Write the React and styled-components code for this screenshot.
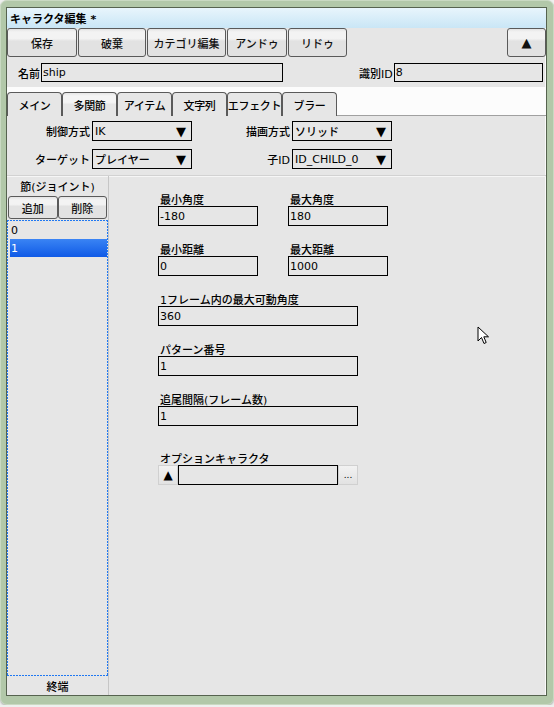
import React from "react";
import styled, { createGlobalStyle } from "styled-components";

const GlobalStyle = createGlobalStyle`
  html, body {
    margin: 0;
    padding: 0;
    background: #eef0ee;
  }
  body {
    font-family: "DejaVu Sans", "Noto Sans CJK JP", sans-serif;
    font-size: 11px;
    font-weight: 500;
    color: #000;
  }
  * { box-sizing: border-box; }
`;

const Frame = styled.div`
  position: relative;
  width: 554px;
  height: 705px;
  padding: 6px 6px 8px 5px;
  background: #b2c8a9;
  border: 1px solid #c9d9c2;
  border-radius: 7px;
  box-shadow: 0 1px 2px rgba(0, 0, 0, 0.25);
  display: flex;
`;

const Inner = styled.div`
  flex: 1;
  display: flex;
  flex-direction: column;
  border: 1px solid #56634f;
  background: #e6e6e6;
  box-shadow: inset -1px 0 0 #fafafa;
`;

const TitleBar = styled.div`
  height: 20px;
  padding-left: 3px;
  display: flex;
  align-items: center;
  font-weight: bold;
  background: linear-gradient(#e8f5fc, #c9e6f6);
`;

const Toolbar = styled.div`
  height: 30px;
  display: flex;
  gap: 1px;
  align-items: flex-start;
`;

const Button = styled.button`
  width: ${(p) => p.$w}px;
  height: ${(p) => p.$h || 29}px;
  margin-left: ${(p) => (p.$push ? "auto" : "0")};
  padding: 0;
  font-family: inherit;
  font-size: 11px;
  font-weight: 500;
  color: #111;
  border: 1px solid #5a5a5a;
  border-radius: 3px;
  background: linear-gradient(
    #e4e4e4 0,
    #f3f3f3 3px,
    #f3f3f3 35%,
    #e2e2e2 45%,
    #e2e2e2 100%
  );
  display: flex;
  align-items: center;
  justify-content: center;
  white-space: nowrap;
`;

const NameRow = styled.div`
  height: 29px;
  padding: 0 3px 0 11px;
  display: flex;
  align-items: center;
  gap: 1px;
`;

const FieldLabel = styled.span`
  white-space: nowrap;
  margin-left: ${(p) => p.$ml || 0}px;
`;

const TextBox = styled.div`
  width: ${(p) => (p.$w ? `${p.$w}px` : "auto")};
  flex: ${(p) => (p.$grow ? 1 : "none")};
  height: ${(p) => p.$h || 20}px;
  border: 1px solid #000;
  background: #e6e6e6;
  padding-left: 1px;
  display: flex;
  align-items: center;
  white-space: nowrap;
`;

const TabStrip = styled.div`
  height: 29px;
  background: #fcfcfc;
  display: flex;
  align-items: flex-end;
  border-bottom: 1px solid #a0a0a0;
`;

const Tab = styled.div`
  width: 55px;
  height: 24px;
  margin-bottom: -1px;
  border: 1px solid #5a5a5a;
  border-bottom: none;
  border-radius: 4px 4px 0 0;
  display: flex;
  align-items: center;
  justify-content: center;
  white-space: nowrap;
  letter-spacing: -0.3px;
  overflow: hidden;
  background: ${(p) =>
    p.$active
      ? "linear-gradient(#e6e6e6 0, #f4f4f4 3px, #f4f4f4 40%, #e6e6e6 50%)"
      : "#e6e6e6"};
`;

const Panel = styled.div`
  flex: 1;
  display: flex;
  flex-direction: column;
  min-height: 0;
`;

const SettingsGrid = styled.div`
  display: grid;
  grid-template-columns: 83px 100px 96px 100px;
  column-gap: 2px;
  row-gap: 8px;
  padding: 5px 0 6px;
  align-items: center;
`;

const RightLabel = styled.span`
  justify-self: end;
  white-space: nowrap;
`;

const Select = styled.div`
  height: 20px;
  border: 1px solid #000;
  padding: 0 5px 0 2px;
  display: flex;
  align-items: center;
  justify-content: space-between;
  white-space: nowrap;
`;

const Arrow = styled.span`
  font-size: 13px;
  line-height: 1;
`;

const Split = styled.div`
  flex: 1;
  display: flex;
  border-top: 1px solid #d2d2d2;
  box-shadow: inset 0 1px 0 #f6f6f6;
`;

const JointPane = styled.div`
  width: 102px;
  display: flex;
  flex-direction: column;
  border-right: 1px solid #c6c6c6;
`;

const PaneCaption = styled.div`
  height: ${(p) => p.$h}px;
  display: flex;
  align-items: center;
  justify-content: center;
  font-size: 11px;
`;

const PaneButtons = styled.div`
  display: flex;
  padding: 0 1px;
`;

const dotsH = "repeating-linear-gradient(90deg, #1f78f2 0 2px, transparent 2px 3px)";
const dotsV = "repeating-linear-gradient(180deg, #1f78f2 0 2px, transparent 2px 3px)";

const JointList = styled.div`
  flex: 1;
  margin: 1px 0 0;
  padding: 1px 1px 1px 3px;
  background:
    ${dotsH} left top / 100% 1px no-repeat,
    ${dotsH} left bottom / 100% 1px no-repeat,
    ${dotsV} left top / 1px 100% no-repeat,
    ${dotsV} right top / 1px 100% no-repeat,
    #e6e6e6;
`;

const JointItem = styled.div`
  height: 18px;
  padding-left: 1px;
  display: flex;
  align-items: center;
  color: ${(p) => (p.$selected ? "#fff" : "#000")};
  background: ${(p) =>
    p.$selected ? "linear-gradient(#3a84f4, #0f5ae6)" : "transparent"};
`;

const Detail = styled.div`
  flex: 1;
  padding: 15px 0 0 49px;
  display: flex;
  flex-direction: column;
  gap: 15px;
`;

const FieldPair = styled.div`
  display: flex;
  gap: 30px;
`;

const Field = styled.div`
  display: flex;
  flex-direction: column;
  margin-top: ${(p) => p.$mt || 0}px;
`;

const Caption = styled.div`
  height: 15px;
  padding-left: 2px;
  display: flex;
  align-items: center;
  white-space: nowrap;
`;

const OptionRow = styled.div`
  display: flex;
  height: 20px;
`;

const SmallButton = styled.div`
  width: ${(p) => p.$w}px;
  height: 20px;
  border: 1px solid #d0d0d0;
  background: linear-gradient(#f2f2f2, #e2e2e2);
  display: flex;
  align-items: center;
  justify-content: center;
  font-size: ${(p) => p.$fs || 11}px;
`;

const Pointer = styled.svg`
  position: absolute;
  left: 476px;
  top: 325px;
`;

const toolButtons = [
  ["保存", 70],
  ["破棄", 68],
  ["カテゴリ編集", 79],
  ["アンドゥ", 60],
  ["リドゥ", 59],
];

const tabs = ["メイン", "多関節", "アイテム", "文字列", "エフェクト", "ブラー"];

const App = () => {
  return (
    <>
      <GlobalStyle />
      <Frame>
        <Inner>
          <TitleBar>キャラクタ編集 *</TitleBar>
          <Toolbar>
            {toolButtons.map(([label, w]) => (
              <Button key={label} $w={w}>
                {label}
              </Button>
            ))}
            <Button $w={39} $push>
              <Arrow>▲</Arrow>
            </Button>
          </Toolbar>
          <NameRow>
            <FieldLabel>名前</FieldLabel>
            <TextBox $w={242} $h={19}>ship</TextBox>
            <FieldLabel $ml={75}>識別ID</FieldLabel>
            <TextBox $grow $h={19}>8</TextBox>
          </NameRow>
          <TabStrip>
            {tabs.map((t) => (
              <Tab key={t} $active={t === "多関節"}>
                {t}
              </Tab>
            ))}
          </TabStrip>
          <Panel>
            <SettingsGrid>
              <RightLabel>制御方式</RightLabel>
              <Select>
                IK<Arrow>▼</Arrow>
              </Select>
              <RightLabel>描画方式</RightLabel>
              <Select>
                ソリッド<Arrow>▼</Arrow>
              </Select>
              <RightLabel>ターゲット</RightLabel>
              <Select>
                プレイヤー<Arrow>▼</Arrow>
              </Select>
              <RightLabel>子ID</RightLabel>
              <Select>
                ID_CHILD_0<Arrow>▼</Arrow>
              </Select>
            </SettingsGrid>
            <Split>
              <JointPane>
                <PaneCaption $h={20}>節(ジョイント)</PaneCaption>
                <PaneButtons>
                  <Button $w={50} $h={23}>追加</Button>
                  <Button $w={50} $h={23}>削除</Button>
                </PaneButtons>
                <JointList>
                  <JointItem>0</JointItem>
                  <JointItem $selected>1</JointItem>
                </JointList>
                <PaneCaption $h={19}>終端</PaneCaption>
              </JointPane>
              <Detail>
                <FieldPair>
                  <Field>
                    <Caption>最小角度</Caption>
                    <TextBox $w={100}>-180</TextBox>
                  </Field>
                  <Field>
                    <Caption>最大角度</Caption>
                    <TextBox $w={100}>180</TextBox>
                  </Field>
                </FieldPair>
                <FieldPair>
                  <Field>
                    <Caption>最小距離</Caption>
                    <TextBox $w={100}>0</TextBox>
                  </Field>
                  <Field>
                    <Caption>最大距離</Caption>
                    <TextBox $w={100}>1000</TextBox>
                  </Field>
                </FieldPair>
                <Field>
                  <Caption>1フレーム内の最大可動角度</Caption>
                  <TextBox $w={200}>360</TextBox>
                </Field>
                <Field>
                  <Caption>パターン番号</Caption>
                  <TextBox $w={200}>1</TextBox>
                </Field>
                <Field>
                  <Caption>追尾間隔(フレーム数)</Caption>
                  <TextBox $w={200}>1</TextBox>
                </Field>
                <Field $mt={9}>
                  <Caption>オプションキャラクタ</Caption>
                  <OptionRow>
                    <SmallButton $w={20} $fs={12}>▲</SmallButton>
                    <TextBox $w={160} />
                    <SmallButton $w={20} $fs={9}>...</SmallButton>
                  </OptionRow>
                </Field>
              </Detail>
            </Split>
          </Panel>
        </Inner>
        <Pointer width="13" height="20" viewBox="0 0 13 20">
          <path
            d="M1 1 L1 15 L4.5 11.5 L7 17.5 L9.2 16.5 L6.8 10.8 L11.5 10.8 Z"
            fill="#fff"
            stroke="#000"
            strokeWidth="1"
            strokeLinejoin="miter"
          />
        </Pointer>
      </Frame>
    </>
  );
};

export default App;
